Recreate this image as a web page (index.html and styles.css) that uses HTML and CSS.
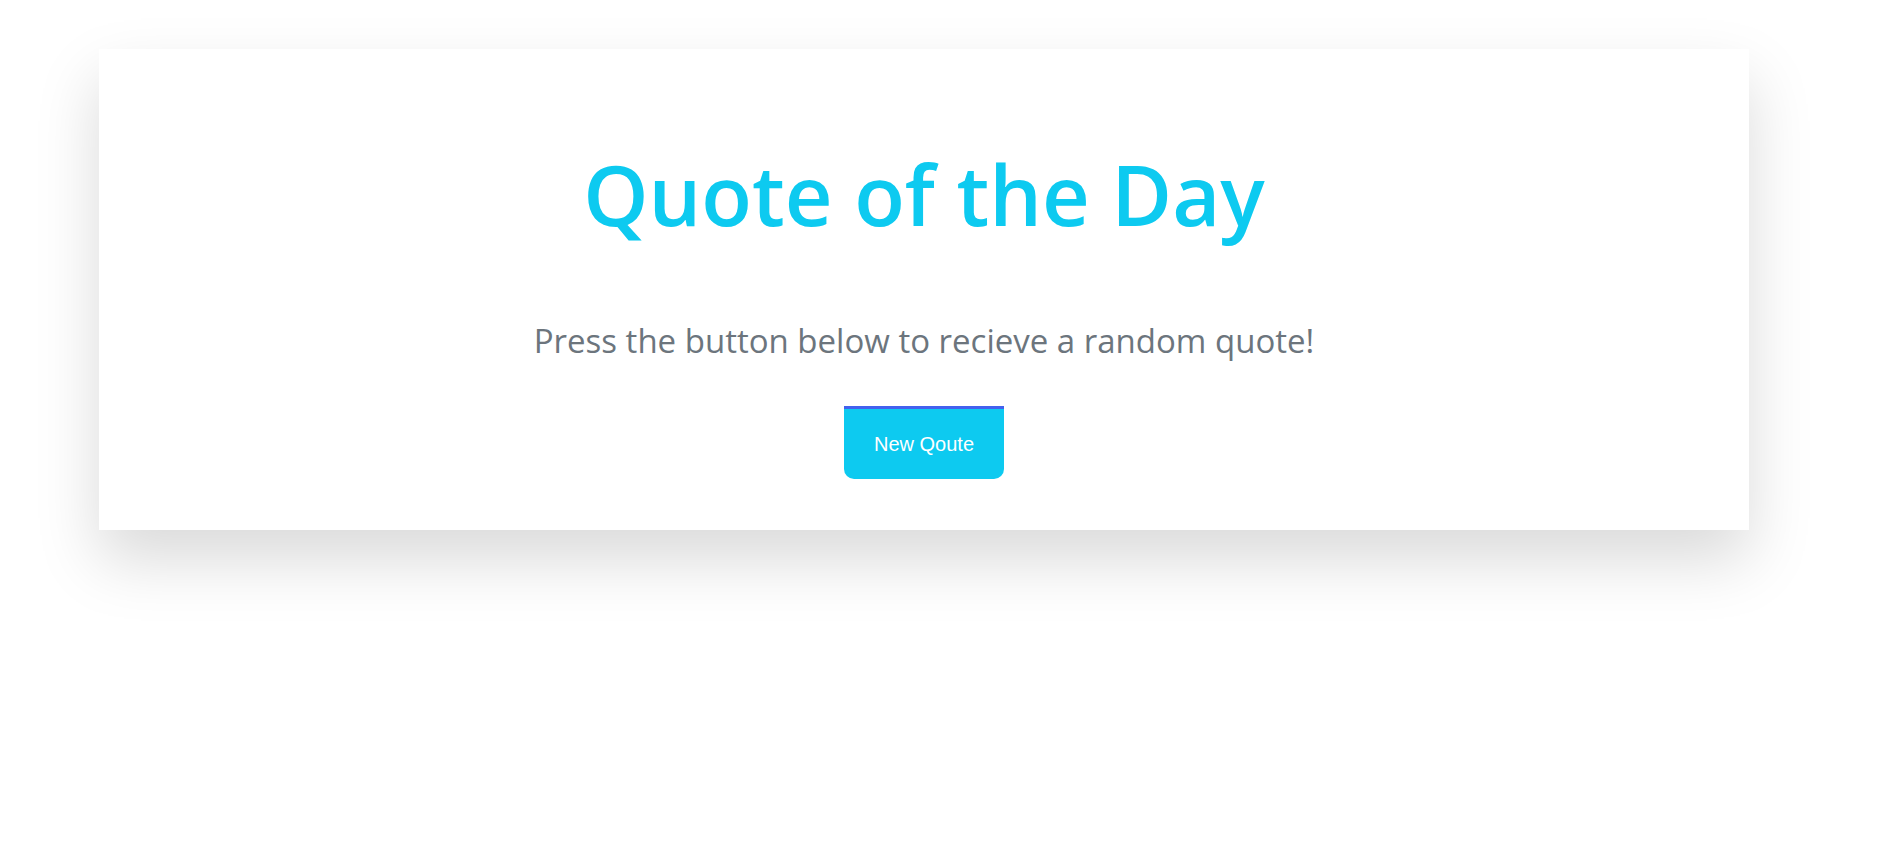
FILE: index.html
```html
<!DOCTYPE html>
<html>
<head>
<meta charset="utf-8">
<link rel="stylesheet" href="styles.css">
</head>
<body>
<main class="card">
  <h1 class="title">Quote of the Day</h1>
  <p class="subtitle">Press the button below to recieve a random quote!</p>
  <button class="btn">New Qoute</button>
</main>
</body>
</html>
```
FILE: styles.css
```css
html, body {
  margin: 0;
  padding: 0;
  background: #ffffff;
}
body {
  font-family: "Open Sans", "Noto Sans", sans-serif;
  padding-top: 49px;
  min-height: 100vh;
  box-sizing: border-box;
}
.card {
  margin-left: 99px;
  width: 1650px;
  height: 481px;
  box-sizing: border-box;
  background: #ffffff;
  box-shadow: 0 30px 60px rgba(0, 0, 0, 0.15);
  display: flex;
  flex-direction: column;
  align-items: center;
  padding-top: 103px;
}
.title {
  margin: 0;
  font-size: 83px;
  font-weight: 600;
  line-height: 1;
  color: #0dcaf0;
}
.subtitle {
  margin: 89px 0 0;
  font-size: 33px;
  font-weight: 400;
  line-height: 1;
  color: #6c757d;
}
.btn {
  margin-top: 49px;
  width: 160px;
  height: 73px;
  border: none;
  border-top: 3px solid #4361ee;
  border-radius: 0 0 10px 10px;
  background: #0dcaf0;
  color: #ffffff;
  font-family: "Liberation Sans", Arial, sans-serif;
  font-size: 20px;
  cursor: pointer;
}
```
